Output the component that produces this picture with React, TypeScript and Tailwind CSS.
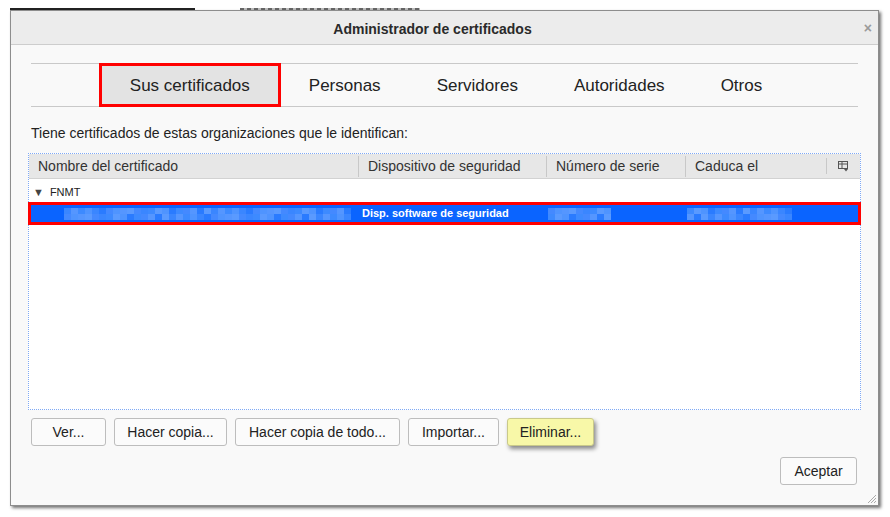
import React from 'react';

const font = { fontFamily: '"Liberation Sans", Arial, sans-serif' };

const tabs = ['Sus certificados', 'Personas', 'Servidores', 'Autoridades', 'Otros'];

// pixelated (blurred-out) blocks on the selected row
const shades = ['bg-[#3a86ff]', 'bg-[#4f94ff]', 'bg-[#4489ff]', 'bg-[#5a9aff]', 'bg-[#3d8aff]', 'bg-[#2a7bff]', 'bg-[#5596ff]'];

const Blur: React.FC<{ count: number; seed: number }> = ({ count, seed }) => (
  <div className="flex flex-col">
    {[0, 1].map((r) => (
      <div key={r} className="flex">
        {Array.from({ length: count }).map((_, i) => (
          <div key={i} className={`w-[7px] h-[6px] ${shades[(i * 5 + r * 2 + seed + ((i * i) % 3)) % shades.length]}`} />
        ))}
      </div>
    ))}
  </div>
);

const Btn: React.FC<{ label: string; w: string; yellow?: boolean }> = ({ label, w, yellow }) => (
  <button
    className={`${w} h-[28px] rounded-[3px] border text-[14px] text-[#222] flex items-center justify-center ${
      yellow
        ? 'bg-[#f8f8a8] border-[#c9c98a] shadow-[2px_3px_4px_rgba(0,0,0,0.45)]'
        : 'bg-[#fbfbfb] border-[#bdbdbd]'
    }`}
  >
    {label}
  </button>
);

const ColIcon = () => (
  <svg width="11" height="11" viewBox="0 0 11 11">
    <rect x="0.5" y="0.5" width="9" height="7" fill="none" stroke="#555" strokeWidth="1" />
    <line x1="0.5" y1="3" x2="9.5" y2="3" stroke="#555" strokeWidth="1" />
    <line x1="4" y1="0.5" x2="4" y2="7.5" stroke="#555" strokeWidth="1" />
    <path d="M6 8 L10 8 L8 10.5 Z" fill="#555" />
  </svg>
);

const App: React.FC = () => {
  return (
    <div className="w-[890px] h-[517px] bg-white overflow-hidden relative" style={font}>
      {/* underlying window peeking out */}
      <div className="absolute left-[10px] top-[8px] w-[185px] h-[3px] bg-[#222]" />
      <div className="absolute left-[240px] top-[8px] w-[180px] h-[3px] bg-[repeating-linear-gradient(90deg,#666_0px,#666_4px,#bbb_4px,#bbb_7px)]" />

      <div className="absolute left-[10px] top-[10px] w-[869px] h-[496px] bg-[#f9f9f9] border border-[#8d8d8d] shadow-[2px_2px_3px_rgba(0,0,0,0.55)] flex flex-col">
        {/* title bar */}
        <div className="h-[34px] pt-[3px] pr-[24px] bg-[#ececec] border-b border-[#cdcdcd] flex items-center justify-center relative shrink-0">
          <span className="text-[14px] font-bold text-[#2a2a2a]">Administrador de certificados</span>
          <span className="absolute right-[6px] top-[10px] text-[14px] text-[#9a9a9a] font-bold leading-none">×</span>
        </div>

        <div className="px-[20px] flex flex-col flex-1">
          {/* tabs */}
          <div className="mt-[18px] h-[44px] border-t border-b border-[#c9c9c9] flex justify-center shrink-0">
            {tabs.map((t, i) => (
              <div
                key={t}
                className={`px-[28px] pt-[2px] flex items-center text-[17px] text-[#222] ${
                  i === 0 ? 'bg-[#e3e3e3] border-[3px] border-[#ff0000] -my-px px-[25px]' : ''
                }`}
              >
                {t}
              </div>
            ))}
          </div>

          <div className="mt-[17px] text-[14px] text-[#222] h-[18px] leading-[18px] shrink-0">
            Tiene certificados de estas organizaciones que le identifican:
          </div>

          {/* tree */}
          <div className="-mx-[3px] mt-[11px] h-[257px] border border-dotted border-[#7fa9f5] bg-white flex flex-col shrink-0">
            <div className="h-[25px] bg-[#e7e7e7] border-b border-[#d2d2d2] flex items-center text-[14px] text-[#333] shrink-0">
              <div className="w-[329px] pl-[9px]">Nombre del certificado</div>
              <div className="w-[188px] pl-[9px] border-l border-[#c8c8c8]">Dispositivo de seguridad</div>
              <div className="w-[139px] pl-[9px] border-l border-[#c8c8c8]">Número de serie</div>
              <div className="w-[141px] pl-[9px] border-l border-[#c8c8c8]">Caduca el</div>
              <div className="flex-1 flex justify-center border-l border-[#c8c8c8] h-[16px] items-center">
                <ColIcon />
              </div>
            </div>
            <div className="h-[20px] mt-[3px] flex items-center text-[11px] text-[#222]">
              <span className="ml-[4px] text-[11px] text-[#444] leading-none">▼</span>
              <span className="ml-[6px]">FNMT</span>
            </div>
            <div className="-mx-px h-[23px] border-[3px] border-[#ff0000] bg-[#0a64ff] flex items-center text-[11px] font-bold text-white">
              <div className="w-[329px] pl-[33px] flex">
                <Blur count={41} seed={0} />
              </div>
              <div className="w-[188px] pl-[2px]">Disp. software de seguridad</div>
              <div className="w-[139px] flex">
                <Blur count={9} seed={2} />
              </div>
              <div className="w-[141px] flex">
                <Blur count={15} seed={4} />
              </div>
            </div>
          </div>

          {/* buttons */}
          <div className="mt-[8px] flex gap-[8px] shrink-0">
            <Btn label="Ver..." w="w-[75px]" />
            <Btn label="Hacer copia..." w="w-[113px]" />
            <Btn label="Hacer copia de todo..." w="w-[165px]" />
            <Btn label="Importar..." w="w-[91px]" />
            <Btn label="Eliminar..." w="w-[87px]" yellow />
          </div>

          <div className="mt-[11px] flex justify-end pr-[1px] shrink-0">
            <Btn label="Aceptar" w="w-[77px]" />
          </div>
        </div>

        {/* resize grip */}
        <svg className="absolute right-[1px] bottom-[1px]" width="11" height="11" viewBox="0 0 11 11">
          <line x1="10" y1="2" x2="2" y2="10" stroke="#aaa" strokeWidth="1" />
          <line x1="10" y1="5" x2="5" y2="10" stroke="#aaa" strokeWidth="1" />
          <line x1="10" y1="8" x2="8" y2="10" stroke="#aaa" strokeWidth="1" />
        </svg>
      </div>
    </div>
  );
};

export default App;
